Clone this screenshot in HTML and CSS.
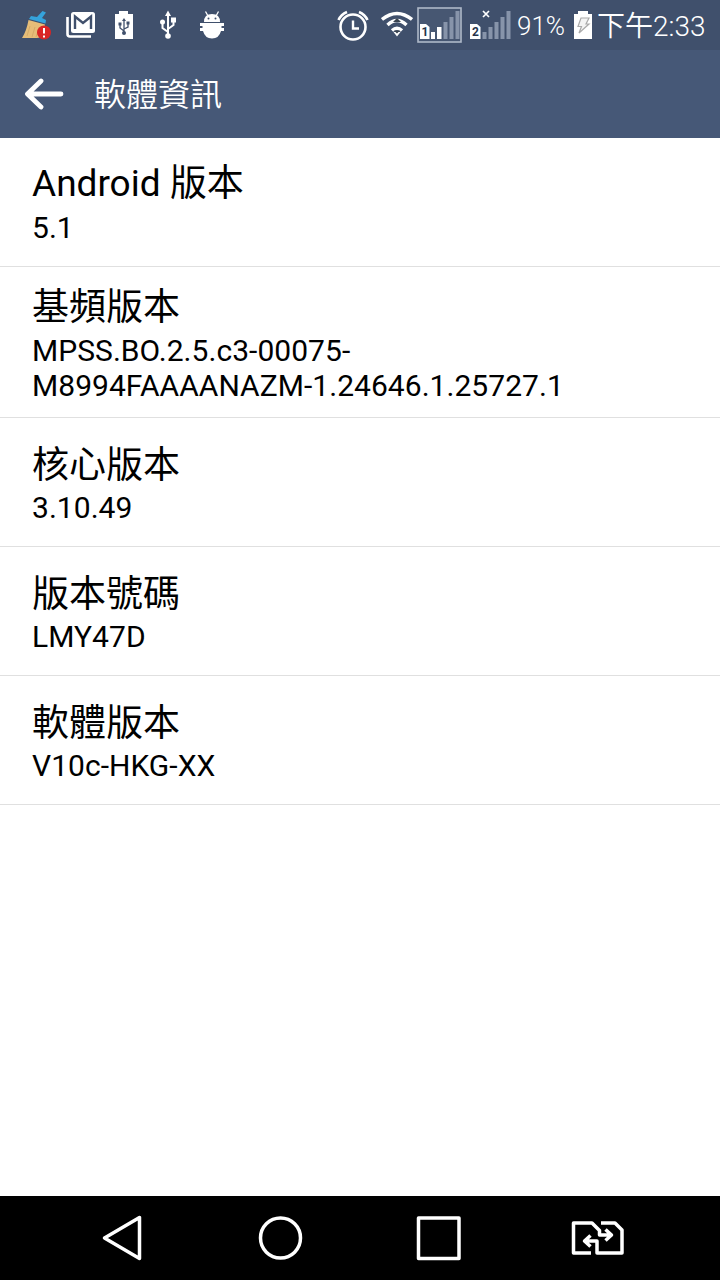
FILE: index.html
```html
<!DOCTYPE html>
<html lang="zh-Hant">
<head>
  <meta charset="utf-8">
  <title>軟體資訊</title>
  <link rel="stylesheet" href="styles.css">
</head>
<body>
  <div class="statusbar">
    <div class="notifications">
      <!-- cleaner -->
      <svg width="32" height="50" viewBox="0 0 32 50">
        <path d="M22.500 11L26 12.500L22 18L26 20L25.500 23.500L9 19L11 16L17 17Z" fill="#35a3dc"/>
        <path d="M8.500 20L25 24.500L23 37L17 38H2Q6.500 31 8.500 20Z" fill="#e6bd78"/>
        <path d="M10 26L7 36M15 27L12 37M19 28L16 37" stroke="#d5ab68" fill="none"/>
        <circle cx="24" cy="32.500" r="7" fill="#d92525"/>
        <path d="M24 28V33.500M24 35.500V37.500" stroke="#fff" stroke-width="2" fill="none"/>
      </svg>
      <!-- mail -->
      <svg width="32" height="50" viewBox="0 0 32 50">
        <path d="M3.500 17V34Q3.500 36.500 6 36.500H27" stroke="#fff" stroke-width="2.600" fill="none"/>
        <rect x="7" y="12" width="24" height="21" rx="2.500" fill="#fff"/>
        <path d="M11 29V16.500L19 23L27 16.500V29" stroke="#40506c" stroke-width="2.400" fill="none"/>
      </svg>
      <!-- usb charging -->
      <svg width="32" height="50" viewBox="0 0 32 50">
        <path d="M11 11H20V14H25V39H7V14H11Z" fill="#fff"/>
        <path d="M16 20V33M16 31L12 28V24M16 29L20 27V23" stroke="#40506c" stroke-width="1.300" fill="none"/>
        <path d="M16 18L18 21H14ZM10.500 22.500h3v3h-3ZM18.500 21.500h3v3h-3Z" fill="#40506c"/>
        <circle cx="16" cy="33" r="2" fill="#40506c"/>
      </svg>
      <!-- usb -->
      <svg width="32" height="50" viewBox="0 0 32 50">
        <path d="M16 14V35M16 32L10.500 28V22M16 29L21.500 25V20" stroke="#fff" stroke-width="2" fill="none"/>
        <path d="M16 10.500L19 16H13ZM19 17.500h5v5h-5Z" fill="#fff"/>
        <circle cx="10.500" cy="22" r="2.500" fill="#fff"/>
        <circle cx="16" cy="36" r="2.800" fill="#fff"/>
      </svg>
      <!-- usb debugging -->
      <svg width="32" height="50" viewBox="0 0 32 50">
        <path d="M8 22Q8 14 16 14Q24 14 24 22Z" fill="#fff"/>
        <path d="M9.500 11.500L12 16M22.500 11.500L20 16" stroke="#fff" stroke-width="1.300"/>
        <circle cx="12.500" cy="18.500" r="1" fill="#40506c"/>
        <circle cx="19.500" cy="18.500" r="1" fill="#40506c"/>
        <path d="M4 23H28V26H25.500V28H28V31H25Q23 38.500 16 38.500Q9 38.500 7 31H4V28H6.500V26H4Z" fill="#fff"/>
      </svg>
    </div>
    <div class="indicators">
      <!-- alarm -->
      <svg width="32" height="50" viewBox="0 0 32 50">
        <g stroke="#fff" fill="none">
          <circle cx="16" cy="27" r="12.500" stroke-width="2.600"/>
          <path d="M16 20.500V28.500H22" stroke-width="2.400"/>
          <path d="M1.500 20Q4 14.500 10 12M30.500 20Q28 14.500 22 12" stroke-width="2.600"/>
        </g>
      </svg>
      <!-- wifi -->
      <svg class="wifi" width="32" height="50" viewBox="0 0 32 50">
        <g stroke="#fff" fill="none">
          <path d="M1 19.500Q16 7.500 31 19.500" stroke-width="3.400"/>
          <path d="M6.500 25Q16 16 25.500 25" stroke-width="3.400"/>
          <path d="M11 30.500Q16 26 21 30.500" stroke-width="3.400"/>
        </g>
        <path d="M12.500 32H19.500L16 36.500Z" fill="#fff"/>
        <path d="M12 22L16 18L20 22ZM13 30.500H19L16 33.500Z" fill="#39434f"/>
      </svg>
      <!-- sim 1, active -->
      <svg class="sim1" width="45" height="50" viewBox="0 0 45 50">
        <rect x="1" y="8" width="43" height="34" fill="#475772" stroke="#aeb9c8" stroke-width="1.600"/>
        <path d="M3 24H9L12.500 27V39H3Z" fill="#fff"/>
        <text class="simno" x="4.500" y="36">1</text>
        <path d="M14 32h4v7h-4ZM20 27h4.500v12h-4.500Z" fill="#fff"/>
        <path d="M26.500 22h4v17h-4ZM32.500 17h4v22h-4ZM38.500 11h4v28h-4Z" fill="#8794aa"/>
      </svg>
      <!-- sim 2, no service -->
      <svg class="sim2" width="41" height="50" viewBox="0 0 41 50">
        <path d="M0 24H7L10.500 27V39H0Z" fill="#fff"/>
        <text class="simno" x="2" y="36">2</text>
        <path d="M13 11L19 17M19 11L13 17" stroke="#fff" stroke-width="1.700"/>
        <path d="M12.500 32h4v7h-4ZM18.500 27h4v12h-4ZM24.500 22h4v17h-4ZM30.500 17h4v22h-4ZM36.500 11h4v28h-4Z" fill="#8794aa"/>
      </svg>
      <span class="percent">91%</span>
      <svg class="battery" width="18" height="50" viewBox="0 0 18 50">
        <path d="M4 11H14V14H18V39H0V14H4Z" fill="#fff"/>
        <path d="M7 18H15L12 24H15L5 33L7.500 26.500H4Z" fill="#f4f4f4" stroke="#aaa" stroke-width="1.200"/>
      </svg>
      <span class="clock">下午2:33</span>
    </div>
  </div>

  <div class="titlebar">
    <svg width="40" height="32" viewBox="0 0 40 32">
      <path d="M37 16H4M17 3L3.500 16L17 29" fill="none" stroke="#fff" stroke-width="4.800" stroke-linecap="round" stroke-linejoin="round"/>
    </svg>
    <h1>軟體資訊</h1>
  </div>

  <div class="list">
    <div class="item latin">
      <div class="name">Android 版本</div>
      <div class="value">5.1</div>
    </div>
    <div class="item two-line">
      <div class="name">基頻版本</div>
      <div class="value">MPSS.BO.2.5.c3-00075-<br>M8994FAAAANAZM-1.24646.1.25727.1</div>
    </div>
    <div class="item">
      <div class="name">核心版本</div>
      <div class="value">3.10.49</div>
    </div>
    <div class="item">
      <div class="name">版本號碼</div>
      <div class="value">LMY47D</div>
    </div>
    <div class="item">
      <div class="name">軟體版本</div>
      <div class="value">V10c-HKG-XX</div>
    </div>
  </div>

  <div class="navbar">
    <svg width="60" height="60" viewBox="0 0 60 60">
      <path d="M11.500 30L46.500 9.500V50.500Z"/>
    </svg>
    <svg width="60" height="60" viewBox="0 0 60 60">
      <circle cx="29.500" cy="30" r="20"/>
    </svg>
    <svg width="60" height="60" viewBox="0 0 60 60">
      <rect x="9.500" y="10" width="40.500" height="40.500"/>
    </svg>
    <svg width="60" height="60" viewBox="0 0 60 60">
      <path d="M24 45H6.500V15H25L32.500 22.500V27H43M38.500 21.500L44.500 27L38.500 32.500M34 15H48L55 22V45H30V33H19M23.500 27.500L17.500 33L23.500 38.500"/>
    </svg>
  </div>
</body>
</html>
```
FILE: styles.css
```css
body {
  margin: 0;
  height: 1280px;
  display: flex;
  flex-direction: column;
  background: #fff;
  color: #000;
  font-family: Roboto, "Noto Sans CJK TC", sans-serif;
}

svg {
  display: block;
  flex-shrink: 0;
}

.statusbar {
  height: 50px;
  display: flex;
  justify-content: space-between;
  background: #40506c;
  color: #fff;
}

.notifications {
  display: flex;
  gap: 12px;
  padding-left: 20px;
}

.indicators {
  display: flex;
  padding-right: 14px;
  white-space: nowrap;
}

.wifi {
  margin-left: 12px;
}

.sim1 {
  margin-left: 4px;
}

.sim2 {
  margin-left: 8px;
}

.simno {
  font-size: 12px;
  font-weight: bold;
  fill: #26344a;
}

.percent {
  width: 57px;
  margin-left: 6px;
  font-size: 26px;
  font-weight: 350;
  line-height: 53px;
}

.clock {
  width: 109px;
  margin-left: 5px;
  font-size: 28px;
  font-weight: 350;
  line-height: 53px;
}

.titlebar {
  height: 88px;
  display: flex;
  align-items: center;
  padding-left: 24px;
  background: #465877;
  color: #fff;
}

h1 {
  margin: 2px 0 0 30px;
  font-size: 32px;
  font-weight: 350;
  line-height: 48px;
}

.list {
  flex-grow: 1;
}

.item {
  box-sizing: border-box;
  height: 129px;
  padding: 24px 32px 0;
  border-bottom: 1px solid #e0e0e0;
}

.latin {
  padding-top: 22px;
}

.two-line {
  height: 151px;
  padding-top: 17px;
}

.name {
  font-size: 37px;
  line-height: 48px;
}

.value {
  margin-top: 0;
  font-size: 30px;
  line-height: 35px;
  letter-spacing: 0.04px;
}

.latin .value {
  margin-top: 2px;
}

.two-line .value {
  margin-top: 1px;
}

.navbar {
  box-sizing: border-box;
  height: 84px;
  display: flex;
  align-items: center;
  justify-content: space-between;
  padding: 0 93px;
  background: #000;
}

.navbar svg {
  fill: none;
  stroke: #fff;
  stroke-width: 3.5;
  stroke-linejoin: round;
}
```
